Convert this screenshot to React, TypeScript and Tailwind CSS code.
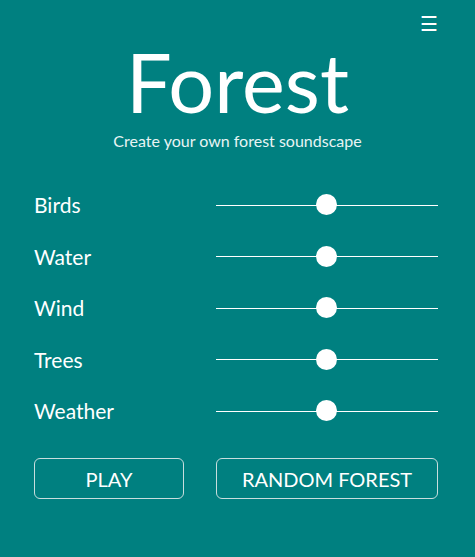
import React from "react";

const rows = ["Birds", "Water", "Wind", "Trees", "Weather"];

function Slider() {
  return (
    <div className="relative h-[22px] w-[222px] flex items-center">
      <div className="h-px w-full bg-white" />
      <div className="absolute left-[100px] top-0 h-[21px] w-[21px] rounded-full bg-white" />
    </div>
  );
}

export default function App() {
  return (
    <div
      className="min-h-[557px] w-full bg-[#008080] text-white"
      style={{ fontFamily: "Lato, 'Noto Sans', sans-serif" }}
    >
      <div className="flex justify-end pr-[37px] pt-[10px] h-[36px]">
        <span className="text-[20px] leading-[26px]">☰</span>
      </div>
      <h1 className="text-center text-[81px] leading-[96px] font-normal -mt-[2px]">Forest</h1>
      <p className="text-center text-[16px] leading-[20px] mt-[1px] text-[#e8f4f4]">Create your own forest soundscape</p>
      <div className="mt-[43px] flex flex-col gap-[29.5px] pl-[34px]">
        {rows.map((r) => (
          <div key={r} className="flex items-center h-[22px]">
            <span className="w-[182px] text-[21px] leading-[22px]">{r}</span>
            <Slider />
          </div>
        ))}
      </div>
      <div className="mt-[36px] flex gap-[32px] pl-[34px]">
        <button className="h-[41px] w-[150px] rounded-[6px] border border-[#c8dede] text-[20px] uppercase">PLAY</button>
        <button className="h-[41px] w-[222px] rounded-[6px] border border-[#c8dede] text-[20px] uppercase">RANDOM FOREST</button>
      </div>
    </div>
  );
}
